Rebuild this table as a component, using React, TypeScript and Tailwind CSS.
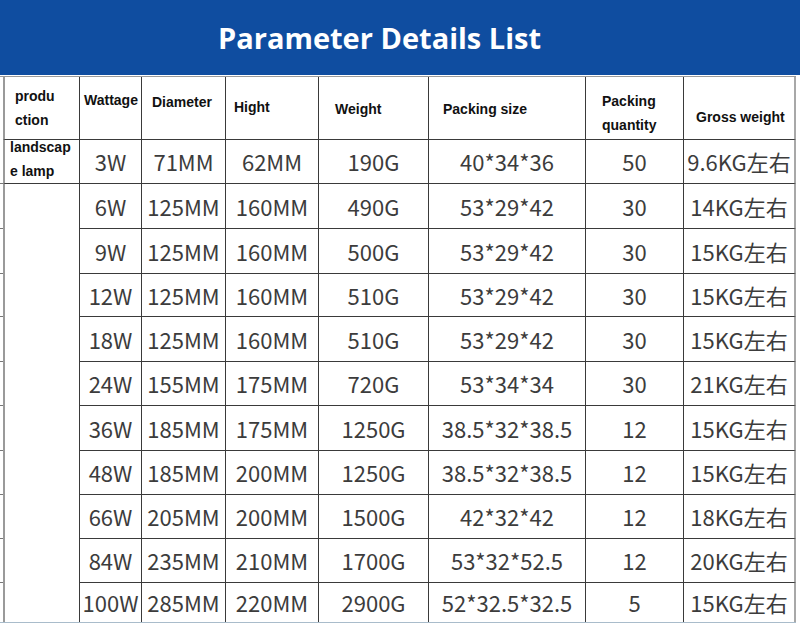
const headers = [
  { lines: ["produ", "ction"], pt: "pt-[7px]", pl: "pl-[10px]" },
  { lines: ["Wattage"], pt: "pt-[11px]", pl: "pl-[4px]" },
  { lines: ["Diameter"], pt: "pt-[13px]", pl: "pl-[10px]" },
  { lines: ["Hight"], pt: "pt-[18px]", pl: "pl-[8px]" },
  { lines: ["Weight"], pt: "pt-[20px]", pl: "pl-[16px]" },
  { lines: ["Packing size"], pt: "pt-[20px]", pl: "pl-[14px]" },
  { lines: ["Packing", "quantity"], pt: "pt-[12px]", pl: "pl-[16px]" },
  { lines: ["Gross weight"], pt: "pt-[28px]", pl: "pl-[12px]" },
]

const rows = [
  ["3W", "71MM", "62MM", "190G", "40*34*36", "50", "9.6KG左右"],
  ["6W", "125MM", "160MM", "490G", "53*29*42", "30", "14KG左右"],
  ["9W", "125MM", "160MM", "500G", "53*29*42", "30", "15KG左右"],
  ["12W", "125MM", "160MM", "510G", "53*29*42", "30", "15KG左右"],
  ["18W", "125MM", "160MM", "510G", "53*29*42", "30", "15KG左右"],
  ["24W", "155MM", "175MM", "720G", "53*34*34", "30", "21KG左右"],
  ["36W", "185MM", "175MM", "1250G", "38.5*32*38.5", "12", "15KG左右"],
  ["48W", "185MM", "200MM", "1250G", "38.5*32*38.5", "12", "15KG左右"],
  ["66W", "205MM", "200MM", "1500G", "42*32*42", "12", "18KG左右"],
  ["84W", "235MM", "210MM", "1700G", "53*32*52.5", "12", "20KG左右"],
  ["100W", "285MM", "220MM", "2900G", "52*32.5*32.5", "5", "15KG左右"],
]

const line = "border-[#3a3a3a]"

function DataCell({ text, last, lastCol }: { text: string; last: boolean; lastCol: boolean }) {
  return (
    <div
      className={`flex items-center justify-center whitespace-nowrap text-[22px] font-normal text-[#3c3c3c] ${line} ${
        last ? "" : "border-b"
      } ${lastCol ? "border-r-2 border-r-[#a8a8a8]" : "border-r"}`}
    >
      {text}
    </div>
  )
}

export default function App() {
  return (
    <div className="w-[800px] h-[624px] bg-white overflow-hidden" style={{ fontFamily: '"Noto Sans CJK SC", "Noto Sans", sans-serif' }}>
      <div className="h-[75px] bg-[#0f4da0] flex items-center pl-[218px]">
        <h1 className="text-white font-bold text-[29px] leading-none" style={{ fontFamily: '"Open Sans", "Noto Sans", sans-serif' }}>
          Parameter Details List
        </h1>
      </div>
      <div className="w-[796px] mt-px border-t border-b border-t-[#9a9a9a] border-b-[#a9bccb]">
        <div className="grid grid-cols-[3px_77px_62px_84px_93px_110px_157px_98px_112px] grid-rows-[63px_44px_45px_45px_43px_45px_44px_45px_44px_44px_44px_39px]">
          {/* header row */}
          <div />
          {headers.map((h, i) => (
            <div
              key={h.lines[0] + i}
              className={`${h.pt} ${h.pl} text-[14px] leading-[24px] font-bold text-[#111] whitespace-nowrap border-b ${line} ${
                i === 0 ? "border-l-2 border-l-[#9a9a9a]" : ""
              } ${i === 7 ? "border-r-2 border-r-[#a8a8a8]" : "border-r"}`}
              style={{ fontFamily: '"Liberation Sans", Arial, sans-serif' }}
            >
              {h.lines.map((l) => (
                <div key={l}>{l}</div>
              ))}
            </div>
          ))}

          {rows.map((r, ri) => (
            <>
              <div key={"t" + ri} className={ri < rows.length - 1 ? "border-b border-[#777]" : ""} />
              {ri === 0 && (
                <div
                  className={`border-l-2 border-l-[#9a9a9a] border-r border-b ${line} pl-[5px] text-[14px] leading-[24px] font-bold text-[#111]`}
                  style={{ fontFamily: '"Liberation Sans", Arial, sans-serif' }}
                >
                  <div className="-mt-[5px]">landscap</div>
                  <div>e lamp</div>
                </div>
              )}
              {ri === 1 && <div className={`row-span-10 border-l-2 border-l-[#9a9a9a] border-r ${line}`} />}
              {r.map((c, ci) => (
                <DataCell key={ri + "-" + ci} text={c} last={ri === rows.length - 1} lastCol={ci === r.length - 1} />
              ))}
            </>
          ))}
        </div>
      </div>
    </div>
  )
}
